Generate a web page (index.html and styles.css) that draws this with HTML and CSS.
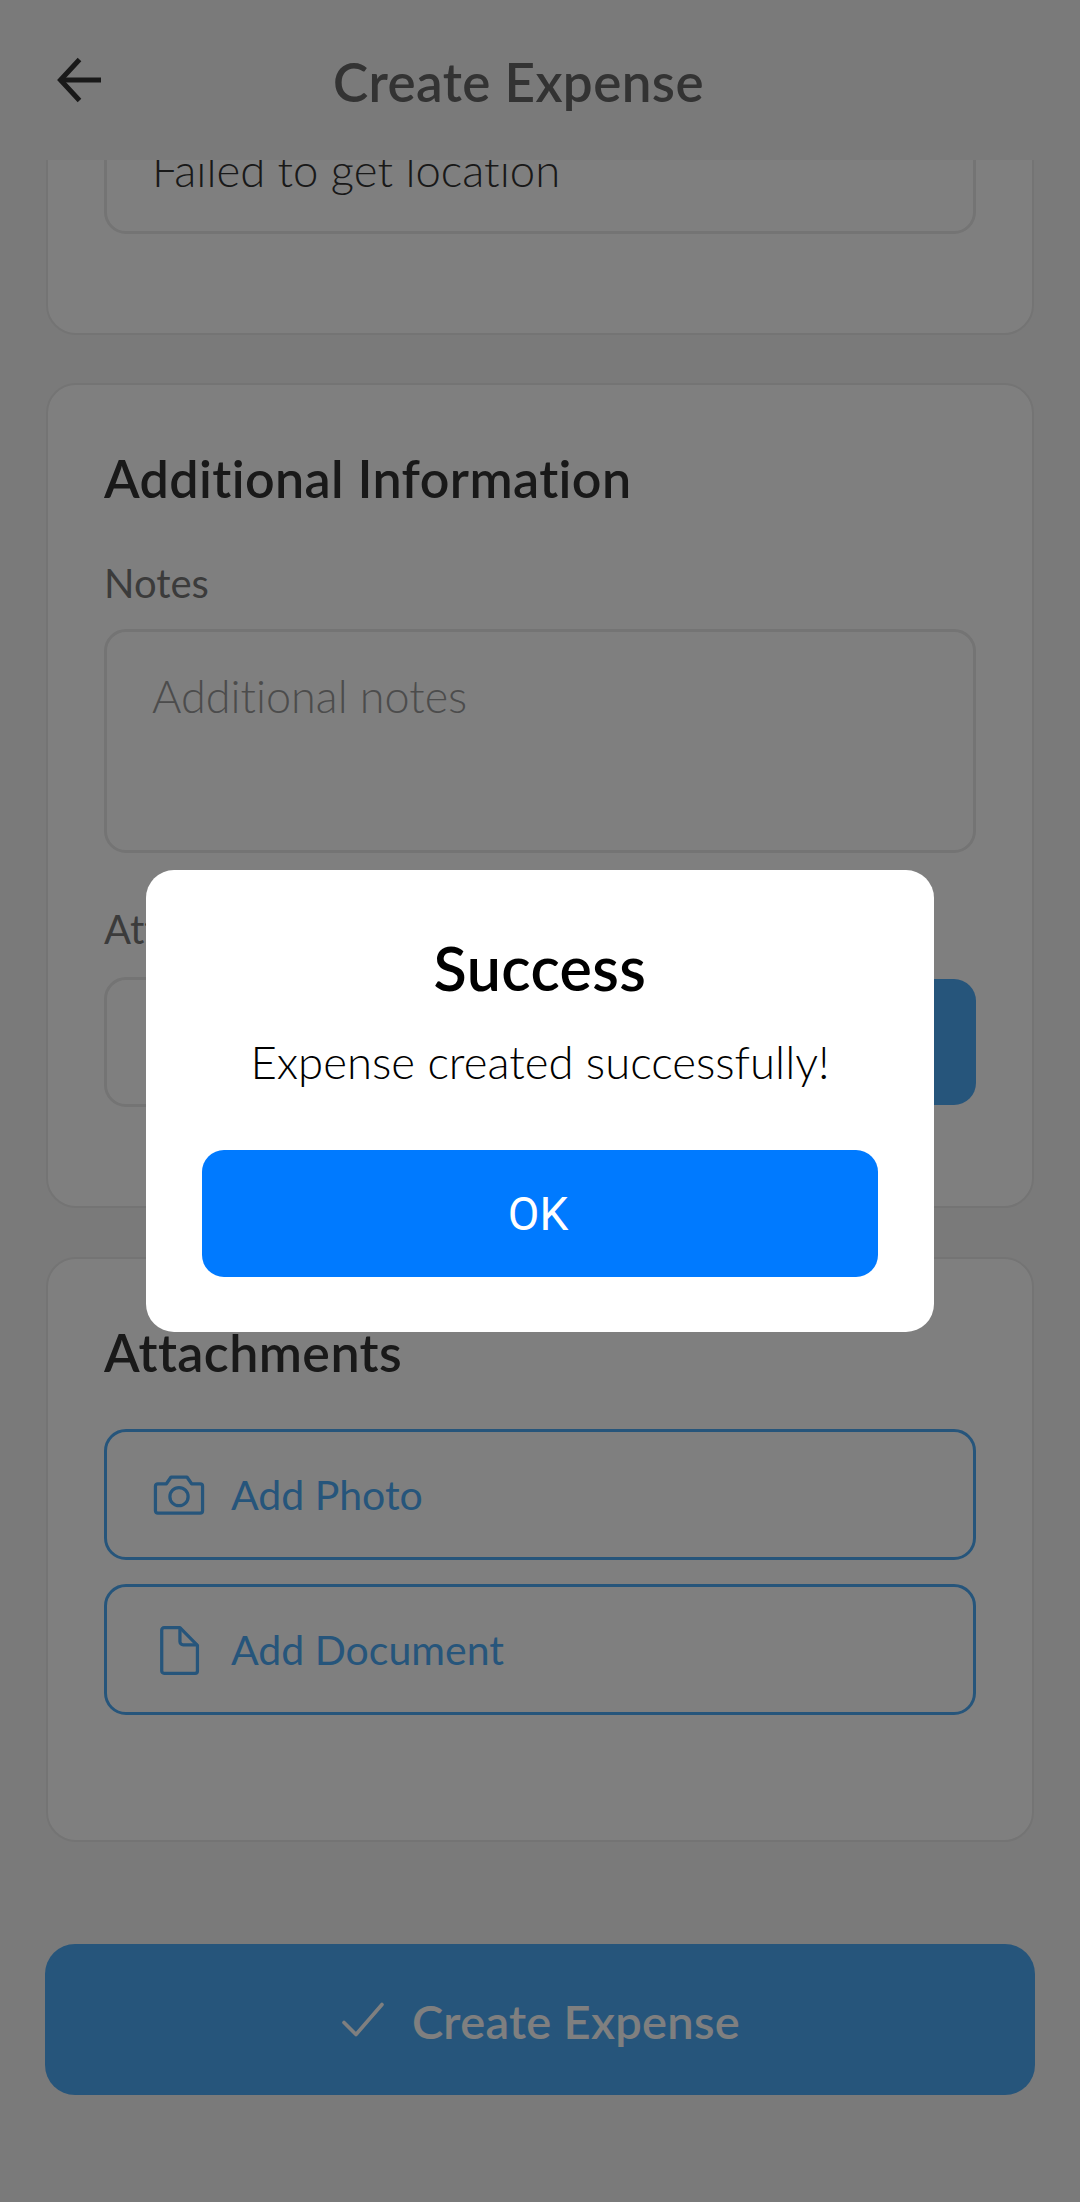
FILE: index.html
```html
<!DOCTYPE html>
<html>
<head>
	<title>Create Expense</title>
	<meta charset="utf-8">
	<meta name="viewport" content="width=device-width, initial-scale=1">
	<link rel="stylesheet" href="styles.css">
</head>
<body>
	<div class="app">
		<header class="header">
			<svg class="back-icon" viewBox="0 0 48 48" fill="none" stroke="#333" stroke-width="5">
				<path d="M46 24H6"/>
				<path d="M24.500 3.500L5.500 24L24.500 44.500"/>
			</svg>
			<h1>Create Expense</h1>
		</header>

		<main class="scroller">
			<section class="card card-location">
				<div class="field field-location">Failed to get location</div>
			</section>

			<section class="card card-info">
				<h2>Additional Information</h2>
				<label class="label">Notes</label>
				<div class="field field-notes">Additional notes</div>
				<label class="label label-tags">Attachment Tags</label>
				<div class="tag-row">
					<div class="field field-tag"></div>
					<div class="tag-add"></div>
				</div>
			</section>

			<section class="card card-attach">
				<h2>Attachments</h2>
				<div class="attach-button">
					<svg viewBox="0 0 24 24" fill="none" stroke="#4dabf7" stroke-width="1.400" stroke-linejoin="round">
						<path d="M2.900 7.200H6.600L8.600 4.300H15.400L17.400 7.200H21.100a1 1 0 0 1 1 1V18.800a1 1 0 0 1-1 1H2.900a1 1 0 0 1-1-1V8.200a1 1 0 0 1 1-1Z"/>
						<circle cx="12" cy="12.700" r="3.900"/>
					</svg>
					<span>Add Photo</span>
				</div>
				<div class="attach-button">
					<svg viewBox="0 0 24 24" fill="none" stroke="#4dabf7" stroke-width="1.400" stroke-linejoin="round">
						<path d="M5.600 2.400H12.400L19.900 10V21a1 1 0 0 1-1 1H5.600a1 1 0 0 1-1-1V3.400a1 1 0 0 1 1-1Z"/>
						<path d="M12.400 2.400V8.400a1.400 1.400 0 0 0 1.400 1.400H19.900"/>
					</svg>
					<span>Add Document</span>
				</div>
			</section>

			<div class="submit">
				<svg viewBox="0 0 48 48" fill="none" stroke="#fff" stroke-width="3.600" stroke-linecap="round" stroke-linejoin="round">
					<path d="M4 26.500L16 38.500L42 8.500"/>
				</svg>
				<span>Create Expense</span>
			</div>
		</main>

		<div class="overlay">
			<div class="modal">
				<h3>Success</h3>
				<p>Expense created successfully!</p>
				<div class="ok-button">OK</div>
			</div>
		</div>
	</div>
</body>
</html>
```

FILE: styles.css
```css
* {
	box-sizing: border-box;
}

body {
	font-family: "Lato", "Liberation Sans", sans-serif;
	font-variant-ligatures: none;
	background-color: #f4f4f4;
	color: #333333;
	margin: 0;
	padding: 0;
}

.app {
	position: relative;
	width: 1080px;
	height: 2202px;
	display: flex;
	flex-direction: column;
	overflow: hidden;
}

.header {
	height: 160px;
	flex-shrink: 0;
	display: flex;
	align-items: center;
	padding: 0 0 0 55px;
	background-color: #f5f5f5;
	position: relative;
	z-index: 1;
}

.back-icon {
	width: 48px;
	height: 48px;
	margin-top: -1px;
}

.header h1 {
	margin: 2px 0 0 230px;
	font-size: 53px;
	font-weight: 600;
	letter-spacing: 0.4px;
	line-height: 1;
	color: #666666;
}

.scroller {
	flex: 1;
	overflow: hidden;
	padding: 0 46px;
	display: flex;
	flex-direction: column;
}

.card {
	background-color: #ffffff;
	border: 2px solid #e8e8e8;
	border-radius: 30px;
	padding: 0 56px;
	flex-shrink: 0;
}

.card-location {
	margin-top: -60px;
	height: 235px;
}

.card-info {
	margin-top: 48px;
	height: 825px;
	padding-top: 64px;
}

.card-attach {
	margin-top: 49px;
	height: 585px;
	padding-top: 64px;
}

.card h2 {
	margin: 0;
	font-size: 52px;
	line-height: 58px;
	font-weight: 600;
	letter-spacing: 0.4px;
	color: #333333;
}

.label {
	display: block;
	margin-top: 54px;
	font-size: 40px;
	line-height: 44px;
	color: #777777;
}

.field {
	border: 3px solid #e8e8e8;
	border-radius: 22px;
	padding: 0 45px;
	font-size: 45px;
}

.field-location {
	height: 132px;
	padding-top: 40px;
	line-height: 50px;
	font-size: 45.500px;
	font-weight: 300;
	color: #333333;
}

.field-notes {
	margin-top: 24px;
	height: 224px;
	padding-top: 39px;
	line-height: 50px;
	font-weight: 300;
	color: #999999;
}

.label-tags {
	margin-top: 54px;
}

.tag-row {
	display: flex;
	gap: 16px;
	margin-top: 26px;
}

.field-tag {
	flex: 1;
	height: 130px;
}

.tag-add {
	width: 126px;
	height: 126px;
	margin-top: 2px;
	background-color: #4dabf7;
	border-radius: 22px;
}

.attach-button {
	display: flex;
	align-items: center;
	height: 131px;
	margin-top: 24px;
	padding-left: 44px;
	border: 3px solid #4dabf7;
	border-radius: 22px;
	color: #4dabf7;
	font-size: 41px;
}

.card-attach h2 + .attach-button {
	margin-top: 48px;
}

.attach-button svg {
	width: 56px;
	height: 56px;
	margin-right: 24px;
}

.submit {
	margin: 102px -1px 0;
	height: 151px;
	flex-shrink: 0;
	display: flex;
	align-items: center;
	justify-content: center;
	gap: 24px;
	background-color: #4dabf7;
	border-radius: 30px;
	color: #ffffff;
	font-size: 47px;
	font-weight: 600;
	letter-spacing: 0.3px;
}

.submit svg {
	width: 48px;
	height: 48px;
}

.submit span {
	margin-top: 2px;
}

.overlay {
	position: absolute;
	inset: 0;
	z-index: 2;
	background-color: rgba(0, 0, 0, 0.5);
}

.modal {
	position: absolute;
	left: 146px;
	top: 870px;
	width: 788px;
	height: 462px;
	padding: 68px 56px 0;
	background-color: #ffffff;
	border-radius: 28px;
	text-align: center;
	color: #000000;
}

.modal h3 {
	margin: 0;
	font-size: 61px;
	line-height: 60px;
	font-weight: 600;
	letter-spacing: 0.4px;
}

.modal p {
	margin: 38px 0 0;
	font-size: 45.500px;
	line-height: 52px;
	font-weight: 300;
}

.ok-button {
	margin-top: 62px;
	height: 127px;
	padding-right: 4px;
	display: flex;
	align-items: center;
	justify-content: center;
	background-color: #007aff;
	border-radius: 22px;
	color: #ffffff;
	font-family: "Roboto", sans-serif;
	font-size: 46px;
}
```
